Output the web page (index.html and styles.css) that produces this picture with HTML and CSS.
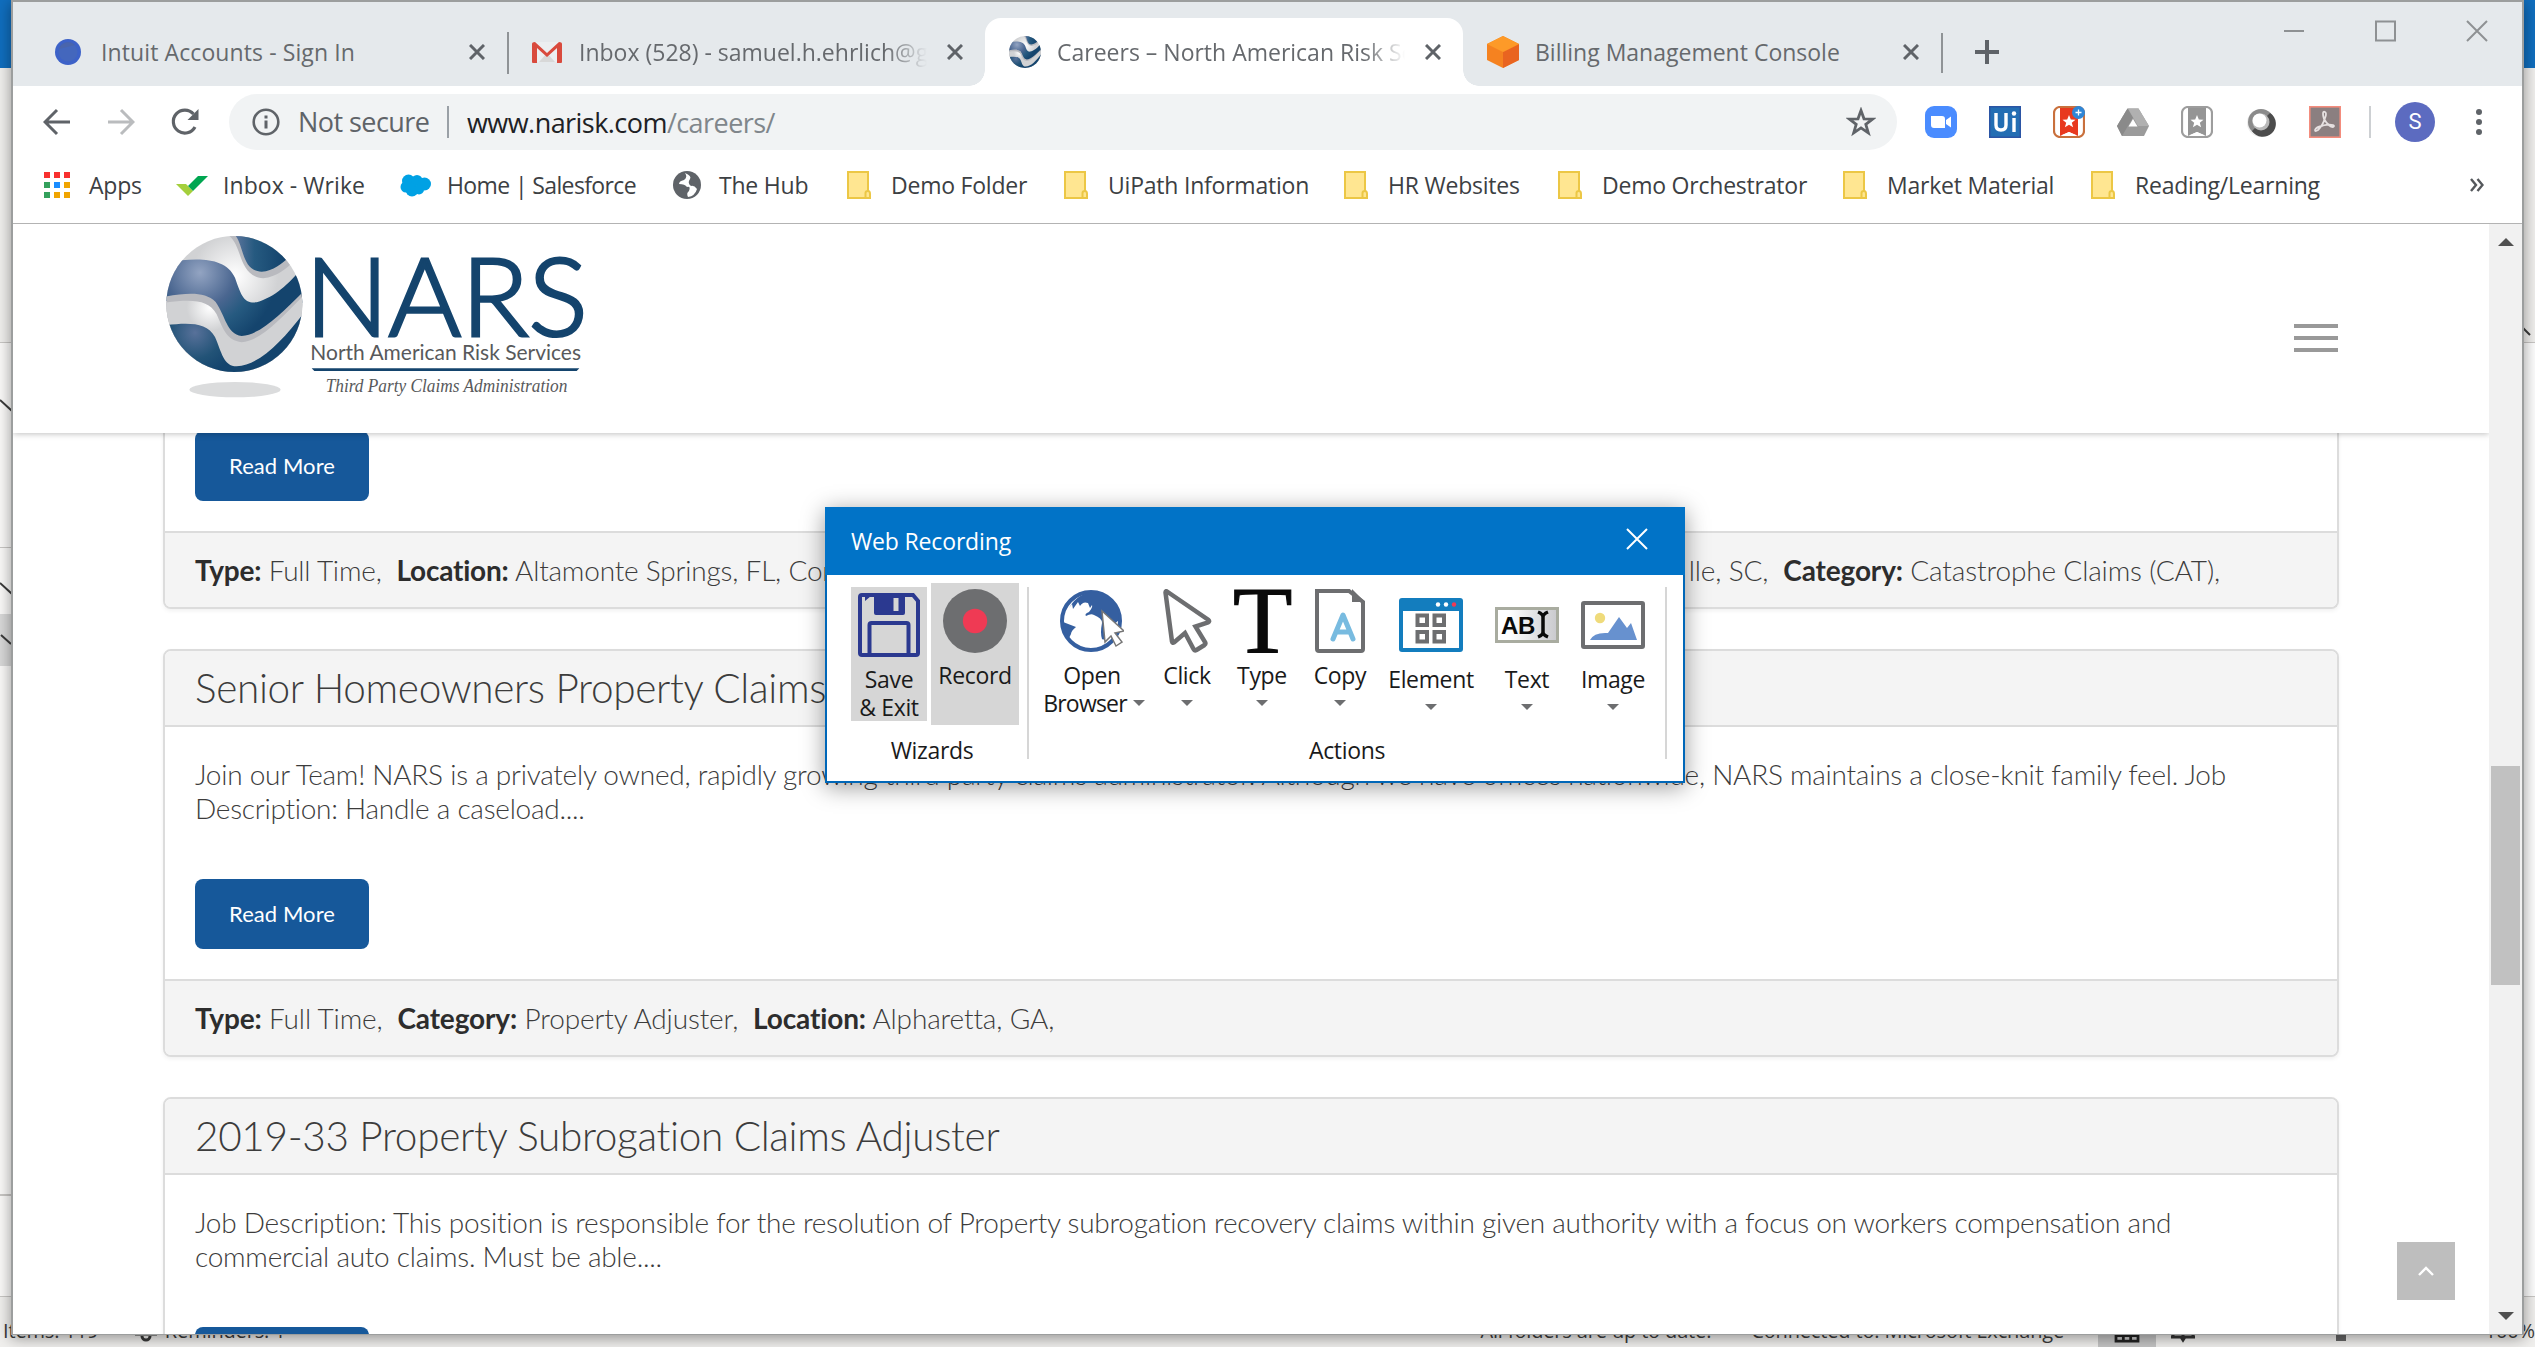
FILE: index.html
```html
<!DOCTYPE html>
<html lang="en">
<head>
<meta charset="utf-8">
<title>Careers – North American Risk Services</title>
<link rel="stylesheet" href="styles.css">
</head>
<body>
<div class="mail">
  <div class="mail-title"></div>
  <div class="mail-ribbon"></div>
  <div class="mail-pane pane-a"></div>
  <div class="mail-pane pane-b"></div>
  <div class="mail-pane pane-sel"></div>
  <div class="mail-pane pane-c"></div>
  <div class="mail-pane pane-d"></div>
  <div class="mail-status">
    <span class="st-items">Items: 119</span>
    <svg class="st-bell" viewBox="0 0 24 28"><path d="M1 18h22M4 18V9a8 8 0 0 1 16 0v9M8 20a4 4 0 0 0 8 0" fill="none" stroke="#3b3b3b" stroke-width="3"/></svg>
    <span class="st-rem">Reminders: 1</span>
    <span class="st-folders">All folders are up to date.</span>
    <span class="st-conn">Connected to: Microsoft Exchange</span>
    <span class="st-view"><svg viewBox="0 0 28 24"><path d="M2 2h24v20H2zM2 16h24M10 2v20M18 2v20" fill="none" stroke="#222" stroke-width="3"/></svg></span>
    <svg class="st-book" viewBox="0 0 28 26"><path d="M2 20h10l2 3 2-3h10M4 2v18M24 2v18M14 2v20" fill="none" stroke="#333" stroke-width="3"/></svg>
    <span class="st-slider"></span>
    <span class="st-zoom">100%</span>
  </div>
  <svg class="mail-chevrons" viewBox="0 0 2535 700" fill="none" stroke="#3b3b3b" stroke-width="2"><path d="M0 400l11 10 6-6M0 583l11 10 6-6M1 635l10 9M2522 327l8 8"/></svg>
</div>

<div class="browser">
  <div class="tabs">
    <div class="tab">
      <svg class="fav" viewBox="0 0 32 32"><circle cx="15" cy="16" r="13" fill="#3d62c8"/><circle cx="15" cy="16" r="9.5" fill="#4467bd"/><path d="M6 13a9.500 9.500 0 0 1 16-4z" fill="#4f64a0" opacity=".6"/></svg>
      <span class="tab-title loose">Intuit Accounts - Sign In</span>
      <svg class="x" viewBox="0 0 16 16"><path d="M1 1l14 14M15 1L1 15"/></svg>
    </div>
    <div class="tab divided">
      <svg class="fav" viewBox="0 0 32 32"><path d="M4 6h24v20H4z" fill="#eceff1"/><path d="M8 26l8-9 8 9z" fill="#d8d8d8"/><path d="M1 26V8q0-2 3-2l12 11L28 6q3 0 3 2v18q0 1-1 1h-4V12L16 21 6 12v15H2q-1 0-1-1z" fill="#d94a3d"/></svg>
      <span class="tab-title fade">Inbox (528) - samuel.h.ehrlich@gmail.com</span>
      <svg class="x" viewBox="0 0 16 16"><path d="M1 1l14 14M15 1L1 15"/></svg>
    </div>
    <div class="tab active">
      <svg class="fav" viewBox="0 0 410 410"><use href="#globe" x="-33" y="-29"/></svg>
      <span class="tab-title fade">Careers – North American Risk Services</span>
      <svg class="x" viewBox="0 0 16 16"><path d="M1 1l14 14M15 1L1 15"/></svg>
    </div>
    <div class="tab">
      <svg class="fav" viewBox="0 0 32 32"><path d="M16 0l16 8v16l-16 8-16-8V8z" fill="#f58220"/><path d="M16 16l16-8v16l-16 8z" fill="#e96420"/><path d="M16 0l16 8-16 8L0 8z" fill="#fd9a28"/></svg>
      <span class="tab-title">Billing Management Console</span>
      <svg class="x" viewBox="0 0 16 16"><path d="M1 1l14 14M15 1L1 15"/></svg>
    </div>
    <i class="tab-end"></i>
    <svg class="plus" viewBox="0 0 24 24"><path d="M12 0v24M0 12h24" stroke="#5f6368" stroke-width="4"/></svg>
    <svg class="winctl" viewBox="0 0 204 22" fill="none" stroke="#8e9193" stroke-width="2"><path d="M0 11h20M92 1.500h19v19H92zM183 1l20 20M203 1l-20 20"/></svg>
  </div>

  <div class="toolbar">
    <div class="nav">
      <svg viewBox="0 0 28 28"><path d="M27 14H3M14 2L2 14l12 12" fill="none" stroke="#5f6368" stroke-width="3"/></svg>
      <svg viewBox="0 0 28 28"><path d="M1 14h24M14 2l12 12-12 12" fill="none" stroke="#babcbe" stroke-width="3"/></svg>
      <svg viewBox="0 0 28 28"><path d="M24 19A11.500 11.500 0 1 1 22.500 6" fill="none" stroke="#5f6368" stroke-width="3.200"/><path d="M27.500 1v11h-11z" fill="#5f6368"/></svg>
    </div>
    <div class="omnibox">
      <svg class="info" viewBox="0 0 28 28"><circle cx="14" cy="14" r="12.300" fill="none" stroke="#5f6368" stroke-width="2.600"/><path d="M12.500 7.500h3v3h-3zM12.500 12.500h3v8h-3z" fill="#5f6368"/></svg>
      <span class="insecure">Not secure</span>
      <span class="url">www.narisk.com<span class="path">/careers/</span></span>
      <svg class="star" viewBox="0 0 30 30"><path d="M15 3.500l3 8.300 8.700.3-6.900 5.300 2.500 8.500-7.300-5-7.300 5 2.500-8.500-6.900-5.300 8.700-.3z" fill="none" stroke="#5f6368" stroke-width="2.800"/></svg>
    </div>
    <div class="exts">
      <svg viewBox="0 0 32 32"><rect width="32" height="32" rx="9" fill="#4a8cff"/><path d="M6 10h11q3 0 3 3v9H9q-3 0-3-3zM21 14l5-3.500v11L21 18z" fill="#fff"/></svg>
      <svg viewBox="0 0 32 32"><rect width="32" height="32" fill="#2b55a5"/><rect x="1.500" y="1.500" width="29" height="29" fill="#236eb3"/><path d="M7 7v12q0 5 5 5t5-5V7M25 12v14" fill="none" stroke="#fff" stroke-width="3.400"/><circle cx="25" cy="7.500" r="2.200" fill="#fff"/></svg>
      <svg viewBox="0 0 32 32"><rect x="1" y="1" width="30" height="30" rx="6" fill="#fff" stroke="#c9703c" stroke-width="2.200"/><path d="M7 2h18v28l-9-4-9 4z" fill="#e8391f"/><path d="M9 29l7-3 7 3z" fill="#fff"/><path d="M16 9l1.800 4.500 4.700.2-3.700 3 1.300 4.600L16 18.700l-4.100 2.600 1.300-4.600-3.700-3 4.700-.2z" fill="#fff"/><circle cx="25.500" cy="6.500" r="6.500" fill="#2f86d6"/><path d="M25.500 3.500v6M22.500 6.500h6" stroke="#fff" stroke-width="1.300"/></svg>
      <svg viewBox="0 0 32 32"><path d="M10.500 2.500h11L32 20l-5 10H5L0 20z" fill="#9b9b9b"/><path d="M10.500 2.500l5.500 9L5 30 0 20z" fill="#8a8a8a"/><path d="M11 2.500h10.500L32 20H21z" fill="#b0b0b0"/><path d="M16 13l4.500 7.500h-9z" fill="#fff"/></svg>
      <svg viewBox="0 0 32 32"><rect x="1" y="1" width="30" height="30" rx="6" fill="#fff" stroke="#9d9d9d" stroke-width="2.200"/><path d="M7 2h18v28l-9-4-9 4z" fill="#959595"/><path d="M9 29l7-3 7 3z" fill="#fff"/><path d="M16 9l1.800 4.500 4.700.2-3.700 3 1.300 4.600L16 18.700l-4.100 2.600 1.300-4.600-3.700-3 4.700-.2z" fill="#fff"/></svg>
      <svg viewBox="0 0 32 32"><circle cx="16" cy="17" r="14" fill="#ededed"/><circle cx="16" cy="16" r="13" fill="#8b8b8b"/><path d="M25 7a13 13 0 1 1-18 18z" fill="#4c4c4c"/><circle cx="16" cy="16" r="8.500" fill="#b9b9b9"/><circle cx="14.500" cy="14.500" r="7" fill="#fff"/></svg>
      <svg viewBox="0 0 32 32"><rect x=".8" y=".8" width="30.400" height="30.400" fill="#8b7f80" stroke="#f48c7d" stroke-width="1.600"/><path d="M14 8q0-3 2-2 2 1 0 6-2 7-7 12-3 2-3 0 1-3 8-4.500 6-1.500 10-.5 2 1 0 2-4 0-9-8Q14 10 14 8z" fill="none" stroke="#e6e0e0" stroke-width="1.800"/></svg>
    </div>
    <span class="avatar">S</span>
    <svg class="dots" viewBox="0 0 6 26" fill="#5f6368"><circle cx="3" cy="3" r="3"/><circle cx="3" cy="13" r="3"/><circle cx="3" cy="23" r="3"/></svg>
  </div>

  <div class="bookmarks">
    <a><svg viewBox="0 0 32 32"><path d="M2 3h6v6H2zM12 3h6v6h-6zM22 3h6v6h-6z" fill="#f8312f"/><path d="M2 13h6v6H2zM2 23h6v6H2z" fill="#34a05c"/><path d="M12 13h6v6h-6z" fill="#1a8cff"/><path d="M22 13h6v6h-6zM12 23h6v6h-6zM22 23h6v6h-6z" fill="#f0a400"/></svg><span>Apps</span></a>
    <a class="wide"><svg viewBox="0 0 32 32"><path d="M0 15h10l7 7-5 5z" fill="#a4cf3c"/><path d="M22 7h10L17 22l-5-5z" fill="#00a651"/></svg><span>Inbox - Wrike</span></a>
    <a class="tight"><svg viewBox="0 0 32 32" fill="#00a1e4"><circle cx="8.500" cy="12" r="6.500"/><circle cx="17" cy="11.500" r="5.500"/><circle cx="24.500" cy="15" r="6.500"/><circle cx="6" cy="18" r="5.500"/><circle cx="12" cy="21" r="6.500"/><circle cx="19" cy="20.500" r="5"/></svg><span>Home | Salesforce</span></a>
    <a><svg viewBox="0 0 32 32"><circle cx="15" cy="16" r="14" fill="#5f6368"/><path d="M13 4q3 4-1 7-5 1-5 4 6 0 8 3 4-1 2 4-3 2-1 6 7-1 9-8-3-4-6-3-4-3-1-7 2-3-5-6z" fill="#fff"/></svg><span>The Hub</span></a>
    <a><svg viewBox="0 0 32 32"><path d="M4 3h20v19q2 0 2 3v4H4z" fill="#ffe691" stroke="#ecc745" stroke-width="2"/><path d="M21.500 29v-5q0-2 2.500-2" fill="none" stroke="#ecc745" stroke-width="2"/></svg><span>Demo Folder</span></a>
    <a><svg viewBox="0 0 32 32"><path d="M4 3h20v19q2 0 2 3v4H4z" fill="#ffe691" stroke="#ecc745" stroke-width="2"/><path d="M21.500 29v-5q0-2 2.500-2" fill="none" stroke="#ecc745" stroke-width="2"/></svg><span>UiPath Information</span></a>
    <a><svg viewBox="0 0 32 32"><path d="M4 3h20v19q2 0 2 3v4H4z" fill="#ffe691" stroke="#ecc745" stroke-width="2"/><path d="M21.500 29v-5q0-2 2.500-2" fill="none" stroke="#ecc745" stroke-width="2"/></svg><span>HR Websites</span></a>
    <a><svg viewBox="0 0 32 32"><path d="M4 3h20v19q2 0 2 3v4H4z" fill="#ffe691" stroke="#ecc745" stroke-width="2"/><path d="M21.500 29v-5q0-2 2.500-2" fill="none" stroke="#ecc745" stroke-width="2"/></svg><span>Demo Orchestrator</span></a>
    <a><svg viewBox="0 0 32 32"><path d="M4 3h20v19q2 0 2 3v4H4z" fill="#ffe691" stroke="#ecc745" stroke-width="2"/><path d="M21.500 29v-5q0-2 2.500-2" fill="none" stroke="#ecc745" stroke-width="2"/></svg><span>Market Material</span></a>
    <a><svg viewBox="0 0 32 32"><path d="M4 3h20v19q2 0 2 3v4H4z" fill="#ffe691" stroke="#ecc745" stroke-width="2"/><path d="M21.500 29v-5q0-2 2.500-2" fill="none" stroke="#ecc745" stroke-width="2"/></svg><span>Reading/Learning</span></a>
    <svg class="more" viewBox="0 0 14 14"><path d="M1 1l5 6-5 6M7.500 1l5 6-5 6" fill="none" stroke="#55585c" stroke-width="2.400"/></svg>
  </div>

  <div class="viewport">
    <div class="page">
      <header class="site-head">
        <svg class="logo" viewBox="0 0 1320 540">
          <defs>
            <radialGradient id="g1" gradientUnits="userSpaceOnUse" cx="135" cy="140" r="230"><stop offset="0" stop-color="#93a4c2"/><stop offset=".45" stop-color="#4a6690"/><stop offset=".7" stop-color="#265a80"/><stop offset="1" stop-color="#14446d"/></radialGradient>
            <linearGradient id="g2" gradientUnits="userSpaceOnUse" x1="240" y1="0" x2="385" y2="0"><stop offset="0" stop-color="#5c759d"/><stop offset=".4" stop-color="#265a80"/><stop offset="1" stop-color="#14446d"/></linearGradient>
            <radialGradient id="g3" gradientUnits="userSpaceOnUse" cx="120" cy="320" r="130"><stop offset="0" stop-color="#58719a"/><stop offset=".6" stop-color="#225377"/><stop offset="1" stop-color="#14446d"/></radialGradient>
            <radialGradient id="g4" gradientUnits="userSpaceOnUse" cx="240" cy="150" r="130"><stop offset="0" stop-color="#fff"/><stop offset="1" stop-color="#d1d2d4"/></radialGradient>
            <radialGradient id="g5" gradientUnits="userSpaceOnUse" cx="165" cy="245" r="70"><stop offset="0" stop-color="#fff"/><stop offset="1" stop-color="#d1d2d4"/></radialGradient>
            <clipPath id="ball"><circle cx="238" cy="234" r="204"/></clipPath>
            <symbol id="globe" overflow="visible"><g clip-path="url(#ball)">
              <rect x="30" y="25" width="420" height="420" fill="url(#g4)"/>
              <path d="M215 25C265 50 245 150 325 157c40-5 70-30 90-50V90H300V25z" fill="#b9babf"/>
              <path d="M238 25c30 30 20 110 82 112 35-2 60-25 85-45V20z" fill="url(#g2)"/>
              <path d="M30 110C120 95 210 90 240 155c20 60 30 78 65 74C350 215 390 190 450 115v110l-185 130c-60-10-60-90-90-130H30z" fill="url(#g1)"/>
              <path d="M30 212c70-12 120-15 152 16 30 42 32 95 78 102 60-5 120-70 190-138V445H30z" fill="#b9babf"/>
              <path d="M30 230c80-10 130-10 155 35 20 45 30 78 75 84 60-5 120-75 190-145v240H30z" fill="url(#g5)"/>
              <path d="M30 298c70-8 125-10 150 35 20 45 25 88 65 88 70-3 140-80 205-165v190H30z" fill="url(#g3)"/>
            </g></symbol>
          </defs>
          <use href="#globe"/>
          <ellipse cx="240" cy="491" rx="137" ry="23" fill="#dbdcdd"/>
          <text class="lg-name" x="450" y="330" textLength="848" lengthAdjust="spacingAndGlyphs">NARS</text>
          <text class="lg-sub" x="466" y="402" textLength="812" lengthAdjust="spacingAndGlyphs">North American Risk Services</text>
          <path d="M470 427h803l-8 8H478z" fill="#14446d"/>
          <text class="lg-tag" x="512" y="498" textLength="725" lengthAdjust="spacingAndGlyphs">Third Party Claims Administration</text>
        </svg>
        <div class="burger"><i></i><i></i><i></i></div>
      </header>
      <main class="jobs">
        <article class="job cut">
          <div class="job-body"><a class="btn">Read More</a></div>
          <footer class="job-foot">
            <span class="place"><b>Type:</b> Full Time,&nbsp; <b>Location:</b> Altamonte Springs, FL, Cor</span>
            <span>lle, SC,&nbsp; <b>Category:</b> Catastrophe Claims (CAT),</span>
          </footer>
        </article>
        <article class="job">
          <h2 class="job-title">Senior Homeowners Property Claims Adjuster</h2>
          <div class="job-body"><p>Join our Team! NARS is a privately owned, rapidly growing third party claims administrator. Although we have offices nationwide, NARS maintains a close-knit family feel. Job<br>Description: Handle a caseload....</p><a class="btn">Read More</a></div>
          <footer class="job-foot"><span><b>Type:</b> Full Time,&nbsp; <b>Category:</b> Property Adjuster,&nbsp; <b>Location:</b> Alpharetta, GA,</span></footer>
        </article>
        <article class="job">
          <h2 class="job-title">2019-33 Property Subrogation Claims Adjuster</h2>
          <div class="job-body"><p>Job Description: This position is responsible for the resolution of Property subrogation recovery claims within given authority with a focus on workers compensation and<br>commercial auto claims. Must be able....</p><a class="btn"></a></div>
        </article>
      </main>
      <a class="to-top"><svg viewBox="0 0 16 10"><path d="M1 9l7-7 7 7" fill="none" stroke="#fff" stroke-width="2.400"/></svg></a>
    </div>
    <div class="scroll">
      <svg viewBox="0 0 16 8"><path d="M8 0l8 8H0z" fill="#505050"/></svg>
      <i class="thumb"></i>
      <svg viewBox="0 0 16 8"><path d="M8 8l8-8H0z" fill="#505050"/></svg>
    </div>
  </div>
</div>

<div class="dialog">
  <div class="dlg-title"><span>Web Recording</span><svg viewBox="0 0 22 22"><path d="M1 1l20 20M21 1L1 21" stroke="#fff" stroke-width="2"/></svg></div>
  <div class="ribbon">
    <section class="group wizards">
      <div class="tools">
        <div class="tool save"><svg viewBox="0 0 62 64"><path d="M4 2h51l5 6v52q0 2-2 2H4q-2 0-2-2V4q0-2 2-2z" fill="none" stroke="#2b3990" stroke-width="4"/><path d="M16 2h31v18q0 2-2 2H18q-2 0-2-2zM7 3h6l-6 5z" fill="#2b3990"/><path d="M35.500 5h5v13h-5z" fill="#d6d6d6"/><path d="M11.500 62V32q0-2 2-2h35q2 0 2 2v30" fill="none" stroke="#2b3990" stroke-width="4"/></svg><span>Save</span><span>&amp; Exit</span></div>
        <div class="tool rec"><svg viewBox="0 0 64 64"><circle cx="32" cy="32" r="32" fill="#6d6e70"/><circle cx="32" cy="32" r="12.200" fill="#ef3a54"/></svg><span>Record</span></div>
      </div>
      <div class="group-name"><span>Wizards</span></div>
    </section>
    <section class="group actions">
      <div class="tools">
        <div class="tool w-open"><svg viewBox="0 0 64 64"><circle cx="31" cy="32" r="29" fill="#fff" stroke="#355fa0" stroke-width="4"/><path d="M9 19l3-4 1 5 5-7 2 4q3-5 8-3l2 5 2-3q1 2-3 7-5 2-3 4 5-3 8-1 8 3 8 8-2 10 0 16 5 3 8-11l9-8Q58 10 42 4 20 0 9 19zM3 33l13 5q-5 4-5 7l-3 6Q3 42 3 33z" fill="#355fa0"/><path d="M42 22l22 20-9 2 7 9-6 4-5-10-6 6z" fill="#fff" stroke="#777" stroke-width="1.500"/></svg><span>Open</span><span class="with-caret"><span>Browser</span><i class="caret"></i></span></div>
        <div class="tool w-click"><svg viewBox="0 0 64 64"><path d="M12 2.500q-1.500-1-1.500 1l6.500 49q.5 2 2 1l11-9.500 8.500 16q1 2 3 1l8-5q1.500-1 .5-3L40.500 37.500l12.500-4q2-1 .5-2.500z" fill="#fff" stroke="#6d6e70" stroke-width="4.500"/></svg><span>Click</span><i class="caret"></i></div>
        <div class="tool w-type"><svg viewBox="0 0 64 64"><text class="big-t" x="3" y="64" textLength="59" lengthAdjust="spacingAndGlyphs">T</text></svg><span>Type</span><i class="caret"></i></div>
        <div class="tool w-copy"><svg viewBox="0 0 64 64"><path d="M9 2h32l14 11v47q0 2-2 2H11q-2 0-2-2z" fill="#fff" stroke="#6d6e70" stroke-width="4"/><path d="M44 0l13 13H44z" fill="#6d6e70"/><path d="M25 50l10-24 10 24M29 43h13" fill="none" stroke="#78bbe0" stroke-width="5" stroke-linecap="round" stroke-linejoin="round"/></svg><span>Copy</span><i class="caret"></i></div>
        <div class="tool low w-elem"><svg viewBox="0 0 64 64"><rect y="9" width="64" height="54" rx="3" fill="#137dbe"/><path d="M4 22h56v37H4z" fill="#fff"/><circle cx="39" cy="15.500" r="2.200" fill="#fff"/><circle cx="47" cy="15.500" r="2.200" fill="#fff"/><circle cx="55" cy="15.500" r="2.200" fill="#ef3a54"/><path d="M18.500 26.500h9.500v9.500h-9.500zM35.500 26.500h9.500v9.500h-9.500zM18.500 43h9.500v9.500h-9.500zM35.500 43h9.500v9.500h-9.500z" fill="none" stroke="#6d6e70" stroke-width="4"/></svg><span>Element</span><i class="caret"></i></div>
        <div class="tool low w-text"><svg viewBox="0 0 64 64"><defs><linearGradient id="tg"><stop offset=".2" stop-color="#fff"/><stop offset="1" stop-color="#c9c9cd"/></linearGradient></defs><path d="M1.500 19.500h61v33h-61z" fill="url(#tg)" stroke="#a9aca0" stroke-width="3"/><text class="ab" x="6" y="45" textLength="34" lengthAdjust="spacingAndGlyphs">AB</text><path d="M43 23q5 2 5 5 0-3 5-5M43 48q5-2 5-5 0 3 5 5M48 28v16" fill="none" stroke="#0a0a0a" stroke-width="3.500"/></svg><span>Text</span><i class="caret"></i></div>
        <div class="tool low w-img"><svg viewBox="0 0 64 64"><rect x="2" y="14" width="60" height="44" rx="1" fill="#fff" stroke="#6d6e70" stroke-width="4"/><circle cx="19" cy="29" r="5.200" fill="#efdb7b"/><path d="M9 51q4-8 18-7l11-16 8 11 4-5 6 17z" fill="#6791cf"/></svg><span>Image</span><i class="caret"></i></div>
      </div>
      <div class="group-name"><span>Actions</span></div>
    </section>
  </div>
</div>
</body>
</html>
```
FILE: styles.css
```css
* { box-sizing: border-box; }
html, body { margin: 0; height: 1347px; overflow: hidden; }
body { position: relative; width: 2535px; font-family: "Open Sans", "Noto Sans", sans-serif; color: #3c4043; }
svg { display: block; flex: none; }
span { white-space: nowrap; }

/* mail client behind the browser */
.mail { display: flex; flex-direction: column; height: 1347px; background: #fdfdfd; }
.mail-title { height: 68px; background: #106ebe; }
.mail-ribbon { height: 275px; background: #f0efed; border-bottom: 1px solid #c8c6c4; }
.mail-pane { width: 14px; background: #faf9f8; border-bottom: 1px solid #c8c6c4; }
.pane-a { height: 205px; }
.pane-b { height: 66px; border: 0; }
.pane-sel { height: 52px; background: #d8d8d8; border: 0; }
.pane-c { height: 530px; border-bottom-width: 2px; }
.pane-d { height: 100px; border: 0; }
.mail-status { display: flex; align-items: center; height: 51px; padding: 16px 0 0 3px; background: #f0efed; border-top: 1px solid #c8c6c4; font-size: 20px; letter-spacing: -.15px; color: #3b3b3b; }
.st-items { width: 131px; }
.st-bell { width: 24px; height: 28px; margin-right: 7px; }
.st-rem { width: 1317px; }
.st-folders { width: 271px; }
.st-conn { width: 347px; }
.st-view { display: flex; justify-content: center; align-items: center; width: 58px; height: 51px; margin: -16px 13px 0 0; padding-top: 20px; background: #c4c4c4; }
.st-view svg { width: 28px; height: 22px; }
.st-book { width: 28px; height: 26px; }
.st-slider { width: 10px; height: 22px; margin: 0 139px 0 139px; background: #666; }
.mail-chevrons { position: absolute; left: 0; top: 0; width: 2535px; height: 700px; }

/* browser window */
.browser { position: absolute; left: 11px; top: 0; width: 2513px; height: 1335px; display: flex; flex-direction: column; border: 2px solid #9c9e9e; border-width: 2px 2px 1px; background: #fff; box-shadow: 0 3px 14px rgba(0,0,0,.4); }
.tabs { display: flex; height: 84px; padding: 16px 0 0 16px; background: #e5e9ec; }
.tab { display: flex; align-items: center; width: 478px; padding: 0 22px 0 24px; }
.divided { border-left: 2px solid #8f9396; border-image: linear-gradient(transparent 15px, #8f9396 15px 55px, transparent 55px) 1; padding-left: 22px; }
.tab.active { position: relative; background: #fff; border-radius: 16px 16px 0 0; }
.tab.active::before, .tab.active::after { content: ""; position: absolute; bottom: 0; width: 16px; height: 16px; }
.tab.active::before { left: -16px; background: radial-gradient(circle at 0 0, transparent 15.500px, #fff 16px); }
.tab.active::after { right: -16px; background: radial-gradient(circle at 100% 0, transparent 15.500px, #fff 16px); }
.fav { width: 32px; height: 32px; margin-right: 16px; }
.tab-title { flex: 1; overflow: hidden; font-size: 23px; line-height: 36px; color: #66696d; }
.tab-title.loose { letter-spacing: .1px; }
.fade { -webkit-mask-image: linear-gradient(90deg, #000 88%, transparent 100%); mask-image: linear-gradient(90deg, #000 88%, transparent 100%); }
.x { width: 16px; height: 16px; margin-left: 20px; stroke: #5f6368; stroke-width: 3; }
.tab-end { width: 2px; height: 40px; margin-top: 15px; background: #8f9396; }
.plus { width: 24px; height: 24px; margin: 22px 0 0 32px; }
.winctl { width: 204px; height: 22px; margin: 2px 0 0 285px; }

.toolbar { display: flex; align-items: center; height: 72px; padding-left: 30px; }
.nav { display: flex; gap: 36px; width: 186px; }
.nav svg { width: 28px; height: 28px; }
.omnibox { display: flex; align-items: center; width: 1668px; height: 56px; padding: 0 21px 0 23px; border-radius: 28px; background: #f1f3f4; font-size: 27px; letter-spacing: -.55px; color: #5f6368; }
.info { width: 28px; height: 28px; margin-right: 18px; }
.insecure { width: 151px; line-height: 32px; border-right: 2px solid #9aa0a6; }
.url { flex: 1; margin-left: 18px; color: #202124; }
.path { color: #80868b; }
.star { width: 30px; height: 30px; }
.exts { display: flex; gap: 32px; margin-left: 28px; padding-right: 28px; border-right: 2px solid #cdd0d3; }
.exts svg { width: 32px; height: 32px; }
.avatar { width: 40px; height: 40px; margin-left: 24px; border-radius: 50%; background: #5c6bc0; color: #fff; font: 22px/40px Roboto, sans-serif; text-align: center; }
.dots { width: 6px; height: 26px; margin-left: 41px; }

.bookmarks { display: grid; grid-template-columns: 134px 224px 272px 172px 217px 280px 214px 285px 248px 382px 14px; align-items: center; height: 66px; padding: 0 0 12px 29px; border-bottom: 1px solid #b3b3b3; font-size: 23px; letter-spacing: -.22px; color: #3c4043; }
.bookmarks a { display: flex; align-items: center; gap: 15px; }
.bookmarks a svg { width: 32px; height: 32px; }
.bookmarks .tight { letter-spacing: -.62px; }
.bookmarks .wide { letter-spacing: .06px; }
.more { width: 14px; height: 14px; }

.viewport { flex: 1; display: flex; min-height: 0; }
.page { position: relative; flex: 1; display: flex; flex-direction: column; overflow: hidden; }
.scroll { display: flex; flex-direction: column; align-items: center; width: 33px; padding: 14px 0 14px; background: #f1f1f1; }
.scroll svg { width: 16px; height: 8px; }
.thumb { width: 29px; height: 219px; margin: 520px 0 auto; background: #c1c1c1; }

.site-head { position: relative; z-index: 1; flex: none; display: flex; justify-content: space-between; height: 209px; padding: 2px 151px 0 142px; background: #fff; box-shadow: 0 1px 6px rgba(0,0,0,.25); }
.logo { width: 440px; height: 180px; }
.lg-name { font: 300 326px Lato, sans-serif; fill: #14446d; stroke: #14446d; stroke-width: 9px; }
.lg-sub { font: 63px Lato, sans-serif; fill: #58595b; }
.lg-tag { font: italic 54px "Liberation Serif", serif; fill: #58595b; }
.burger { display: flex; flex-direction: column; gap: 8px; margin-top: 98px; }
.burger i { width: 44px; height: 4px; background: #999; }

/* job cards */
.jobs { flex: none; display: flex; flex-direction: column; gap: 40px; width: 2176px; margin-left: 150px; font-family: Lato, sans-serif; font-weight: 300; color: #3c3c3c; }
.job { flex: none; height: 408px; display: flex; flex-direction: column; border: 2px solid #dcdcdc; border-radius: 8px; background: #fff; box-shadow: 0 2px 4px rgba(0,0,0,.06); overflow: hidden; }
.job.cut { height: 178px; margin-top: -2px; border-top: 0; border-radius: 0 0 8px 8px; }
.job-title { height: 76px; margin: 0; padding-left: 30px; border-bottom: 2px solid #dcdcdc; background: #f4f4f4; font-size: 40.5px; line-height: 74px; font-weight: 300; letter-spacing: -.32px; }
.job-body { flex: 1; padding: 30px; font-size: 28px; line-height: 34px; letter-spacing: -.25px; white-space: nowrap; }
.cut .job-body { padding-top: 0; }
.job-body p { margin: 0 0 54px; }
.btn { display: flex; align-items: center; justify-content: center; width: 174px; height: 70px; border-radius: 8px; background: #16589a; color: #fff; font-size: 22px; font-weight: 400; letter-spacing: .08px; }
.job-foot { display: flex; justify-content: space-between; align-items: center; height: 78px; padding: 0 117px 0 30px; border-top: 2px solid #dcdcdc; background: #f4f4f4; font-size: 28px; letter-spacing: -.14px; }
.job-foot b { font-weight: 700; color: #2d2d2d; }
.place { letter-spacing: -.2px; }
.to-top { position: absolute; right: 34px; bottom: 34px; display: flex; align-items: center; justify-content: center; width: 58px; height: 58px; background: #bebebe; }
.to-top svg { width: 16px; height: 10px; }

/* recorder dialog */
.dialog { position: absolute; left: 825px; top: 507px; width: 860px; height: 276px; display: flex; flex-direction: column; border: 2px solid #0067b8; border-top: 0; background: #fff; color: #1a1a1a; font-size: 23px; line-height: 28px; letter-spacing: -.35px; box-shadow: 0 4px 22px rgba(0,0,0,.4); }
.dlg-title { display: flex; justify-content: space-between; align-items: center; height: 68px; margin: 0 -2px; padding: 0 37px 0 26px; background: #0173c7; color: #fff; letter-spacing: -.16px; }
.dlg-title svg { width: 22px; height: 22px; margin-top: -4px; }
.ribbon { display: flex; padding-top: 12px; }
.group { display: flex; flex-direction: column; height: 172px; border-right: 2px solid #d6d6d6; }
.tools { flex: none; display: flex; align-items: flex-start; height: 149px; }
.wizards { width: 202px; }
.wizards .tools { gap: 4px; padding-left: 24px; }
.actions { width: 638px; }
.actions .tools { padding-left: 9px; }
.tool { display: flex; flex-direction: column; align-items: center; padding-top: 2px; }
.tool svg { width: 64px; height: 64px; margin-bottom: 8px; }
.tool.save { width: 76px; height: 134px; padding-top: 6px; background: #d6d6d6; }
.save svg { width: 62px; }
.tool.rec { width: 88px; height: 142px; margin-top: -4px; padding-top: 6px; background: #d6d6d6; }
.tool.low svg { margin-bottom: 12px; }
.caret { border: 6px solid transparent; border-top-color: #6d6e70; border-bottom: 0; margin-top: 11px; }
.with-caret { display: flex; align-items: center; gap: 6px; padding-left: 4px; letter-spacing: -.8px; }
.with-caret .caret { margin-top: 0; }
.w-open { width: 108px; } .w-click { width: 82px; } .w-type { width: 68px; } .w-copy { width: 88px; }
.w-elem { width: 94px; } .w-text { width: 98px; } .w-img { width: 74px; }
.group-name { flex: none; text-align: center; line-height: 28px; }
.wizards .group-name { padding-left: 10px; }
.big-t { font: 96px "Liberation Serif", serif; fill: #0a0a0a; stroke: #0a0a0a; stroke-width: 1.200px; }
.ab { font: bold 24px "Liberation Sans", sans-serif; fill: #0a0a0a; }
```
